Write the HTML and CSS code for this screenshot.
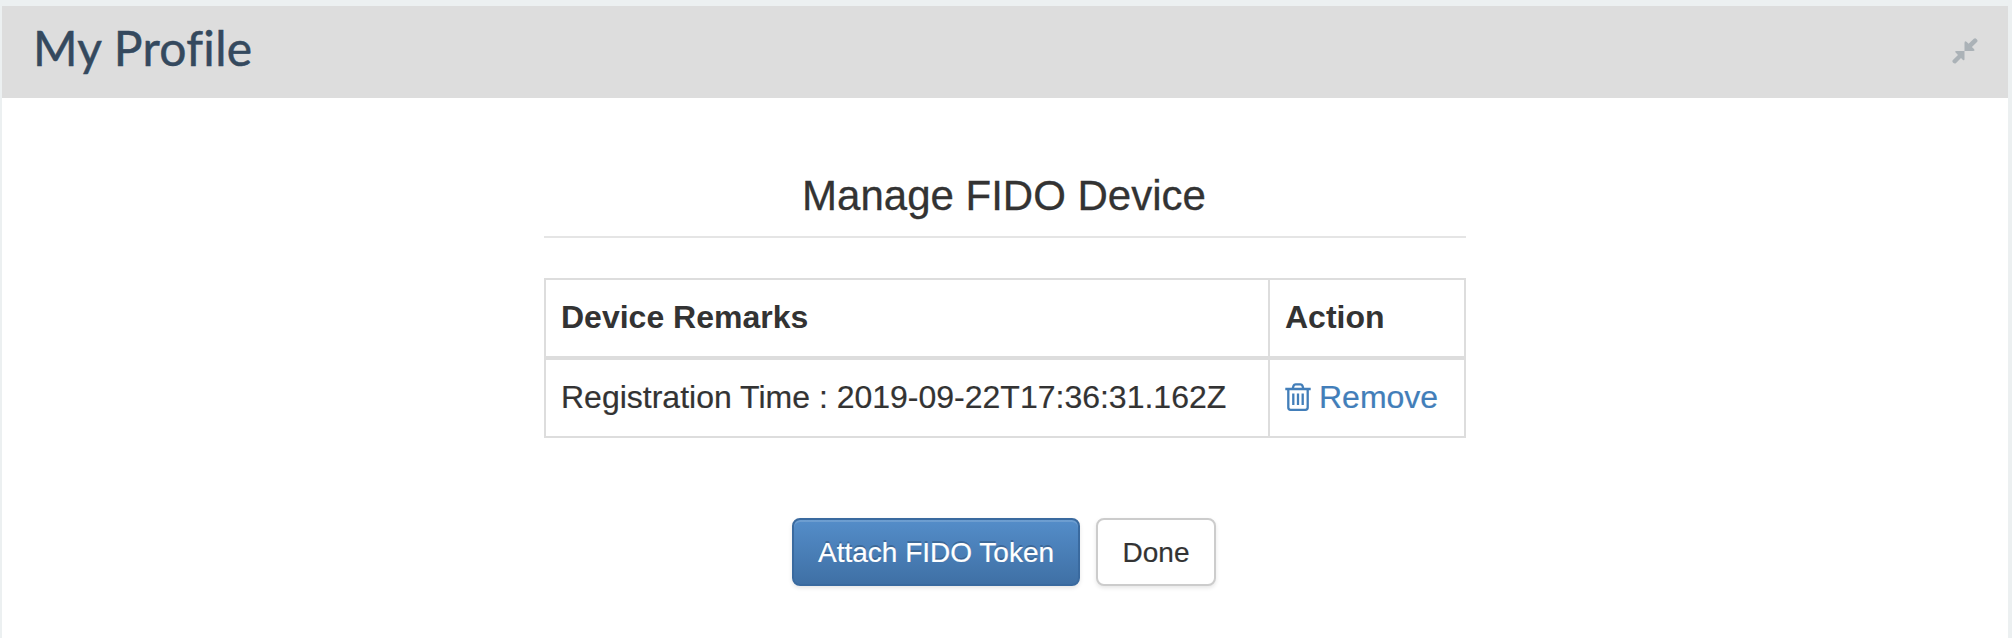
FILE: index.html
```html
<!DOCTYPE html>
<html lang="en">
<head>
<meta charset="utf-8">
<title>My Profile</title>
<link rel="stylesheet" href="styles.css">
</head>
<body>
<section class="panel">
  <header class="panel-header">
    <h1 class="panel-title">My Profile</h1>
    <svg class="collapse-icon" viewBox="0 0 26 26" aria-hidden="true">
      <path d="M12.5 13V5Q12.5 2 14.8 4L16.6 5.8L21.8 .8Q23.2 -.3 24.7 1.2Q26.2 2.7 25 4.1L19.9 9.1L22 11Q23.4 13 21 13Z"/>
      <path d="M12.5 13H4.5Q2 13 4.1 15.1L6 17L.9 22Q-.3 23.4 1.2 24.8Q2.7 26.1 4.1 25L9 19.9L10.7 21.8Q12.5 23.2 12.5 21Z"/>
    </svg>
  </header>
  <main class="panel-body">
    <h2 class="section-title">Manage FIDO Device</h2>
    <table class="devices">
      <thead>
        <tr><th class="remarks">Device Remarks</th><th>Action</th></tr>
      </thead>
      <tbody>
        <tr>
          <td>Registration Time : 2019-09-22T17:36:31.162Z</td>
          <td><a class="remove" href="#"><svg class="trash-icon" viewBox="0 0 26 28" aria-hidden="true"><path d="M.3 6H25.7M3.3 6V24.5Q3.3 26.8 5.6 26.8H20.4Q22.7 26.8 22.7 24.5V6M7.5 6L8.7 2.5Q9.2 1.3 10.5 1.3H15.5Q16.8 1.3 17.3 2.5L18.5 6M8.3 10.5V22M13 10.5V22M17.7 10.5V22"/></svg>Remove</a></td>
        </tr>
      </tbody>
    </table>
    <div class="actions">
      <button class="btn btn-primary">Attach FIDO Token</button>
      <button class="btn btn-default">Done</button>
    </div>
  </main>
</section>
</body>
</html>
```
FILE: styles.css
```css
* { box-sizing: border-box; }

body {
  margin: 0;
  height: 638px;
  padding: 6px 4px 0 2px;
  overflow: hidden;
  background: #ecf0f1;
  color: #333;
  font-family: "Liberation Sans", Arial, sans-serif;
}

.panel {
  height: 632px;
  background: #fff;
}

.panel-header {
  display: flex;
  align-items: center;
  justify-content: space-between;
  height: 92px;
  padding: 0 30px 0 31px;
  background: #ddd;
}

.panel-title {
  margin: 0 0 8px;
  color: #34495e;
  font: 400 48px/58px Lato, sans-serif;
  font-variant-ligatures: none;
  letter-spacing: .3px;
  -webkit-text-stroke: .5px #34495e;
}

.collapse-icon {
  width: 26px;
  height: 26px;
  margin-top: -2px;
  fill: #abb2b7;
}

.panel-body {
  width: 922px;
  margin: 0 auto;
  padding-top: 70px;
}

.section-title {
  height: 70px;
  margin: 0 0 40px;
  padding-right: 2px;
  border-bottom: 2px solid #e5e5e5;
  font-size: 42px;
  font-weight: 400;
  line-height: 56px;
  text-align: center;
  -webkit-text-stroke: .3px #333;
}

.devices {
  width: 922px;
  border-collapse: separate;
  border-spacing: 0;
  border: solid #ddd;
  border-width: 2px 0 0 2px;
  table-layout: fixed;
  font-size: 32px;
  line-height: 43px;
}

.devices th,
.devices td {
  height: 78px;
  padding: 16px 0 15px 15px;
  border: solid #ddd;
  border-width: 0 2px 2px 0;
  text-align: left;
  vertical-align: top;
  white-space: nowrap;
}

.devices th {
  height: 80px;
  border-bottom-width: 4px;
}

.devices td {
  -webkit-text-stroke: .2px currentColor;
}

.devices .remarks { width: 724px; }

.remove {
  display: flex;
  align-items: center;
  gap: 8px;
  color: #427eb9;
  text-decoration: none;
}

.trash-icon {
  width: 26px;
  height: 28px;
  margin-top: -2px;
  fill: none;
  stroke: currentColor;
  stroke-width: 2.3;
}

.actions {
  display: flex;
  justify-content: center;
  gap: 16px;
  margin-top: 80px;
  padding-right: 2px;
}

.btn {
  height: 68px;
  padding: 2px 24px 0;
  border: 2px solid #ccc;
  border-radius: 8px;
  background: #fff;
  color: #333;
  font: 28px/40px "Liberation Sans", Arial, sans-serif;
  white-space: nowrap;
  box-shadow: 0 2px 4px rgba(0, 0, 0, .1);
  -webkit-text-stroke: .2px currentColor;
}

.btn-primary {
  width: 288px;
  border-color: #3a6a9f;
  background: linear-gradient(#548dc9, #3f70a5);
  color: #fff;
  text-shadow: 0 -2px 0 rgba(0, 0, 0, .2);
  box-shadow: inset 0 2px 0 rgba(255, 255, 255, .15), 0 2px 4px rgba(0, 0, 0, .1);
}

.btn-default { width: 120px; }
```
